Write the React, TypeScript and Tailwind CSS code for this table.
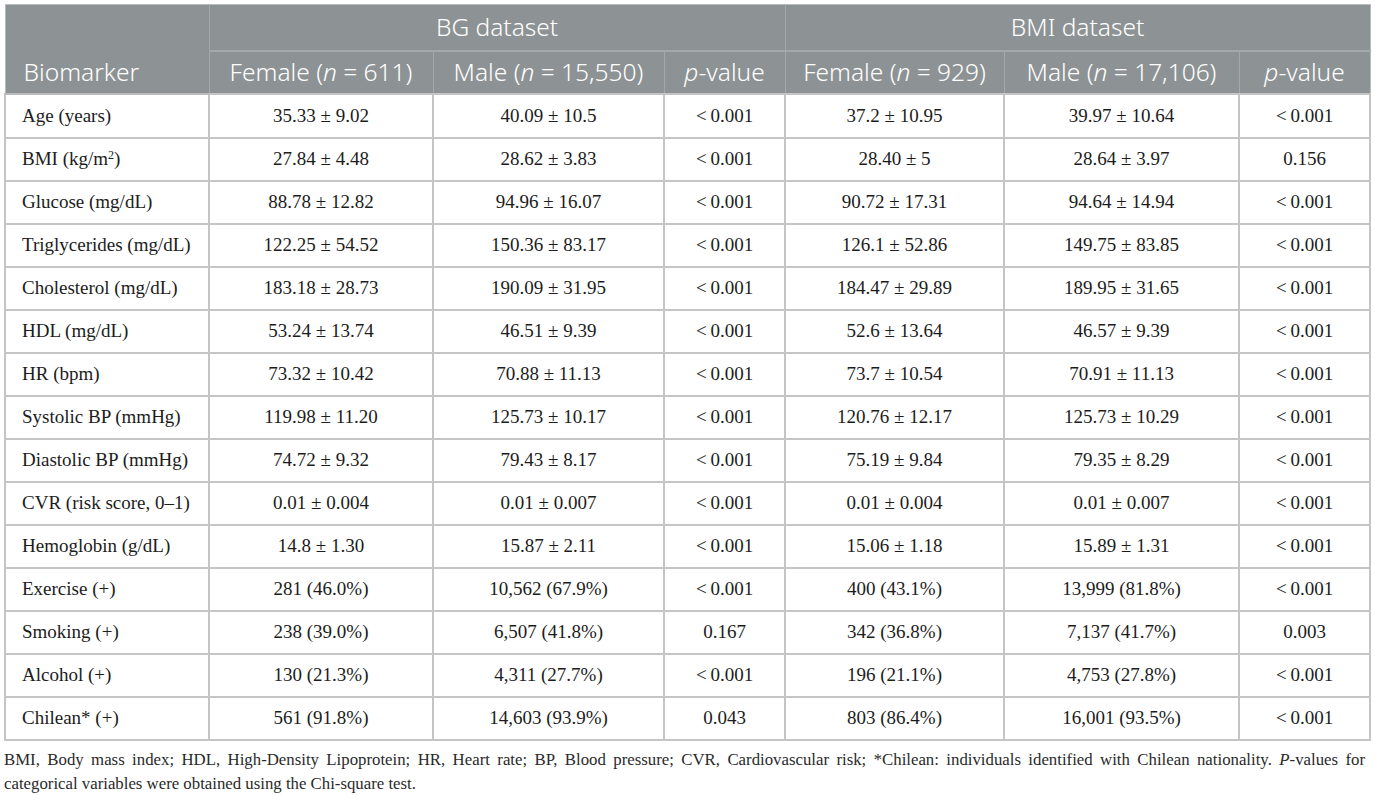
import React from 'react'

const rows: [React.ReactNode, string, string, string, string, string, string][] = [
  ['Age (years)', '35.33 ± 9.02', '40.09 ± 10.5', '<\u20090.001', '37.2 ± 10.95', '39.97 ± 10.64', '<\u20090.001'],
  [<>BMI (kg/m<sup className="text-[12px]">2</sup>)</>, '27.84 ± 4.48', '28.62 ± 3.83', '<\u20090.001', '28.40 ± 5', '28.64 ± 3.97', '0.156'],
  ['Glucose (mg/dL)', '88.78 ± 12.82', '94.96 ± 16.07', '<\u20090.001', '90.72 ± 17.31', '94.64 ± 14.94', '<\u20090.001'],
  ['Triglycerides (mg/dL)', '122.25 ± 54.52', '150.36 ± 83.17', '<\u20090.001', '126.1 ± 52.86', '149.75 ± 83.85', '<\u20090.001'],
  ['Cholesterol (mg/dL)', '183.18 ± 28.73', '190.09 ± 31.95', '<\u20090.001', '184.47 ± 29.89', '189.95 ± 31.65', '<\u20090.001'],
  ['HDL (mg/dL)', '53.24 ± 13.74', '46.51 ± 9.39', '<\u20090.001', '52.6 ± 13.64', '46.57 ± 9.39', '<\u20090.001'],
  ['HR (bpm)', '73.32 ± 10.42', '70.88 ± 11.13', '<\u20090.001', '73.7 ± 10.54', '70.91 ± 11.13', '<\u20090.001'],
  ['Systolic BP (mmHg)', '119.98 ± 11.20', '125.73 ± 10.17', '<\u20090.001', '120.76 ± 12.17', '125.73 ± 10.29', '<\u20090.001'],
  ['Diastolic BP (mmHg)', '74.72 ± 9.32', '79.43 ± 8.17', '<\u20090.001', '75.19 ± 9.84', '79.35 ± 8.29', '<\u20090.001'],
  ['CVR (risk score, 0–1)', '0.01 ± 0.004', '0.01 ± 0.007', '<\u20090.001', '0.01 ± 0.004', '0.01 ± 0.007', '<\u20090.001'],
  ['Hemoglobin (g/dL)', '14.8 ± 1.30', '15.87 ± 2.11', '<\u20090.001', '15.06 ± 1.18', '15.89 ± 1.31', '<\u20090.001'],
  ['Exercise (+)', '281 (46.0%)', '10,562 (67.9%)', '<\u20090.001', '400 (43.1%)', '13,999 (81.8%)', '<\u20090.001'],
  ['Smoking (+)', '238 (39.0%)', '6,507 (41.8%)', '0.167', '342 (36.8%)', '7,137 (41.7%)', '0.003'],
  ['Alcohol (+)', '130 (21.3%)', '4,311 (27.7%)', '<\u20090.001', '196 (21.1%)', '4,753 (27.8%)', '<\u20090.001'],
  ['Chilean* (+)', '561 (91.8%)', '14,603 (93.9%)', '0.043', '803 (86.4%)', '16,001 (93.5%)', '<\u20090.001'],
]

const widths = ['w-[204px]', 'w-[224px]', 'w-[231px]', 'w-[121px]', 'w-[219px]', 'w-[235px]', 'w-[131px]']

export default function App() {
  return (
    <div className="bg-white w-[1375px] h-[795px] overflow-hidden pt-[4px] pl-[4px]">
      <table className="border-collapse table-fixed w-[1365px] border border-[#b9bcbc]">
        <colgroup>
          {widths.map((w, i) => (
            <col key={i} className={w} />
          ))}
        </colgroup>
        <thead className="bg-[#8d9394] text-white font-['Noto_Sans',sans-serif] font-light text-[24.5px] leading-[30px]">
          {/* group headings */}
          <tr className="h-[46px]">
            <th rowSpan={2} className="text-left font-light align-bottom pl-[18px] pb-[6px] border-r border-[#a3a9a9] border-b-2 border-b-[#b9bcbc]">
              Biomarker
            </th>
            <th colSpan={3} className="font-light border-r border-[#a3a9a9] border-b-2 border-b-[#a3a9a9]">
              BG dataset
            </th>
            <th colSpan={3} className="font-light border-b-2 border-b-[#a3a9a9]">
              BMI dataset
            </th>
          </tr>
          <tr className="h-[43px] border-b-2 border-b-[#b9bcbc]">
            <th className="font-light border-r border-[#a3a9a9]">Female (<i>n</i> = 611)</th>
            <th className="font-light border-r border-[#a3a9a9]">Male (<i>n</i> = 15,550)</th>
            <th className="font-light border-r border-[#a3a9a9]"><i>p</i>-value</th>
            <th className="font-light border-r border-[#a3a9a9]">Female (<i>n</i> = 929)</th>
            <th className="font-light border-r border-[#a3a9a9]">Male (<i>n</i> = 17,106)</th>
            <th className="font-light"><i>p</i>-value</th>
          </tr>
        </thead>
        <tbody className="font-['Liberation_Serif',serif] text-[19px] leading-[24px] text-[#1c1c1c]">
          {rows.map((r, i) => (
            <tr key={i} className={i === 0 ? 'h-[44px]' : 'h-[43px]'}>
              {r.map((c, j) => (
                <td
                  key={j}
                  className={
                    'border-2 border-[#c4c6c6] ' + (j === 0 ? 'text-left pl-[16px]' : 'text-center')
                  }
                >
                  {c}
                </td>
              ))}
            </tr>
          ))}
        </tbody>
      </table>
      <div className="font-['Liberation_Serif',serif] text-[16.8px] leading-[24px] text-[#2a2a2a] mt-[7px] w-[1361px] whitespace-nowrap">
        <div className="text-justify [text-align-last:justify] whitespace-normal">
          BMI, Body mass index; HDL, High-Density Lipoprotein; HR, Heart rate; BP, Blood pressure; CVR, Cardiovascular risk; *Chilean: individuals identified with Chilean nationality. <i>P</i>-values for
        </div>
        <div>categorical variables were obtained using the Chi-square test.</div>
      </div>
    </div>
  )
}
